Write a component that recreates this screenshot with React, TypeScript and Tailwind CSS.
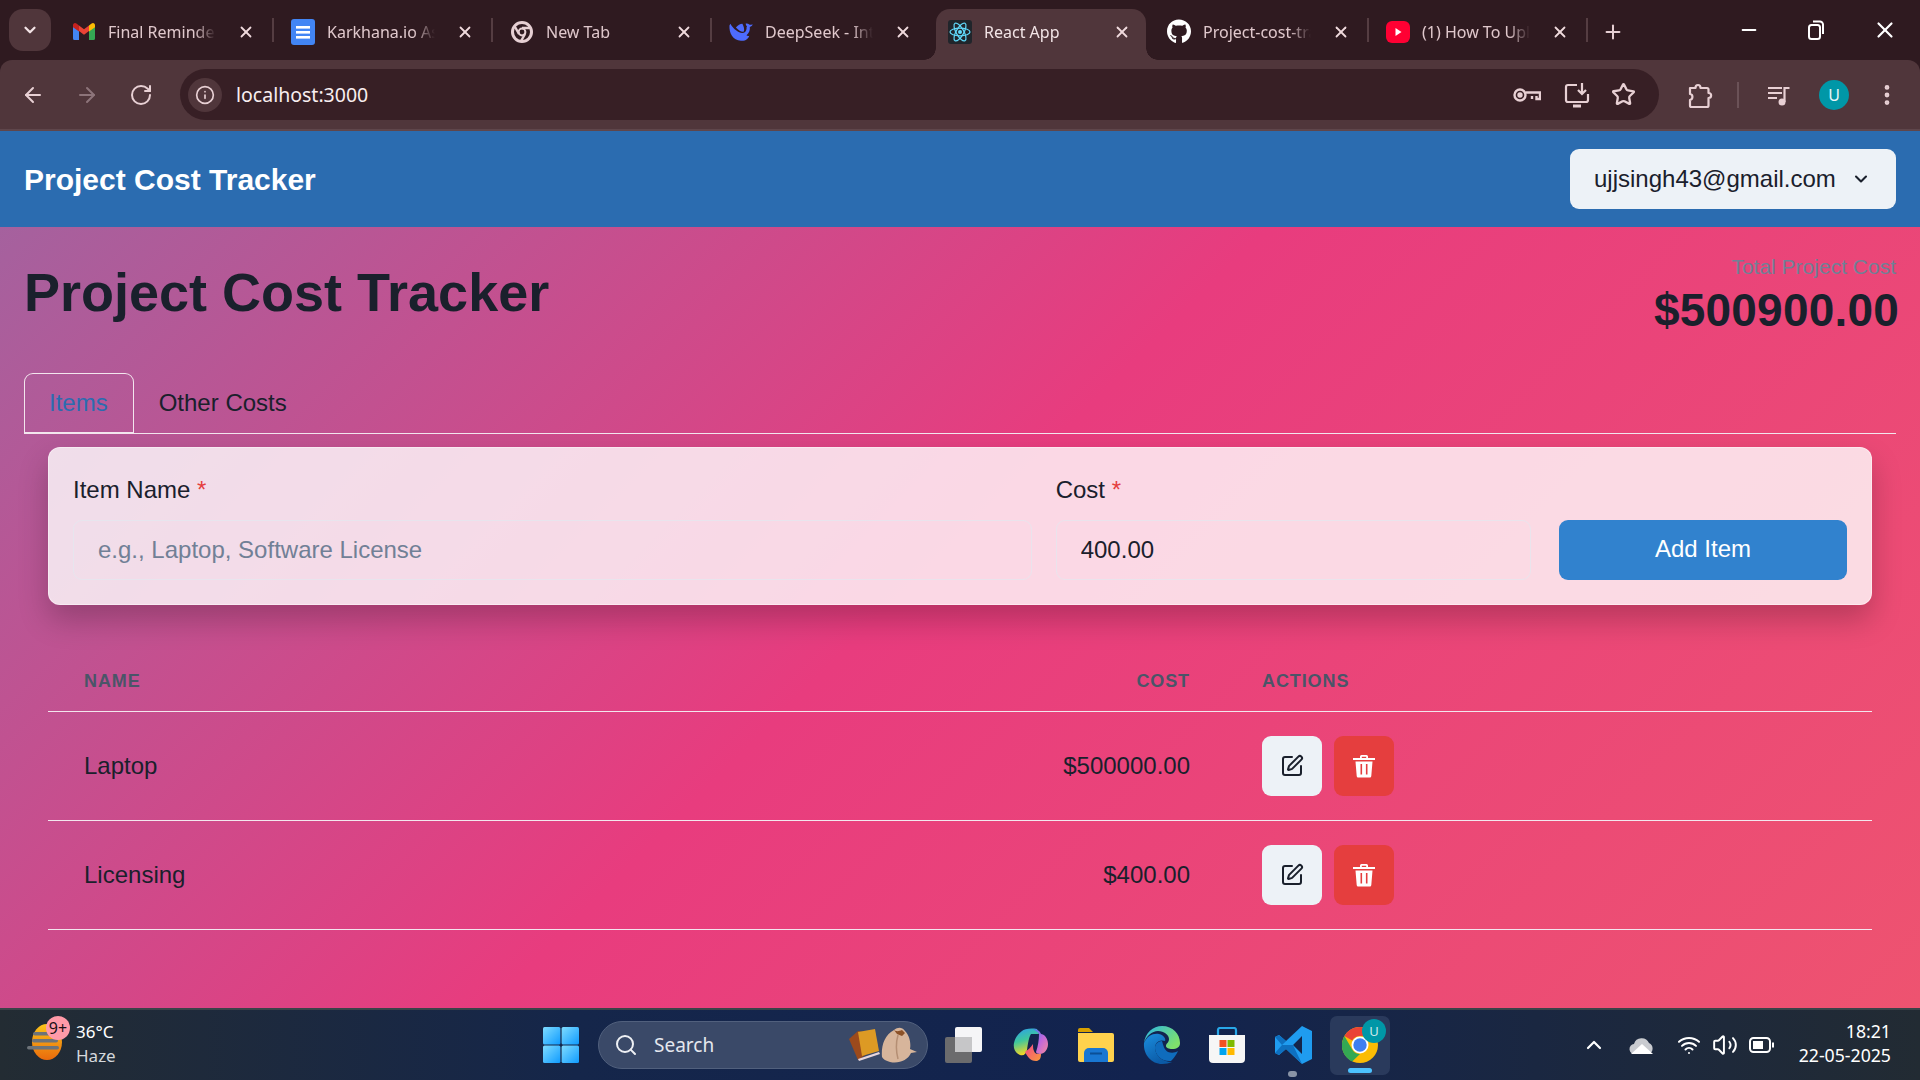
import { useState } from 'react';
import {
  ArrowLeft,
  ArrowRight,
  RotateCw,
  Info,
  Star,
  ChevronDown,
  ChevronUp,
  Plus,
  X,
  Minus,
  MoreVertical,
  Search,
  SquarePen,
  Wifi,
  Volume2,
} from 'lucide-react';
import { FaGithub } from 'react-icons/fa';

const GmailIcon = () => (
  <svg width="24" height="24" viewBox="0 0 24 24">
    <path fill="#4285F4" d="M1 20V6l6 4.5V20H2.5A1.5 1.5 0 0 1 1 18.5z" />
    <path fill="#34A853" d="M23 20V6l-6 4.5V20h4.5a1.5 1.5 0 0 0 1.5-1.5z" />
    <path fill="#EA4335" d="M7 11V5.5L12 9.3l5-3.8V11l-5 3.8z" />
    <path fill="#FBBC04" d="M17 5.5l2.6-1.9A2.1 2.1 0 0 1 23 5.3V7.2L17 11.6z" />
    <path fill="#C5221F" d="M1 7.2V5.3a2.1 2.1 0 0 1 3.4-1.7L7 5.5v6.1z" />
  </svg>
);

const DocsIcon = () => (
  <svg width="24" height="26" viewBox="0 0 24 26">
    <rect width="24" height="26" rx="3" fill="#4285F4" />
    <rect x="5" y="7" width="14" height="2.6" fill="#fff" />
    <rect x="5" y="12" width="14" height="2.6" fill="#fff" />
    <rect x="5" y="17" width="14" height="2.6" fill="#fff" />
  </svg>
);

const NewTabIcon = () => (
  <svg width="24" height="24" viewBox="0 0 24 24" fill="none" stroke="#e6cfd3">
    <circle cx="12" cy="12" r="9.5" strokeWidth="3" />
    <circle cx="12" cy="12" r="3.4" strokeWidth="2" />
    <path d="M12 8h9M9 14 4.5 6M15 14l-4.5 8" strokeWidth="2.4" />
  </svg>
);

const DeepSeekIcon = () => (
  <svg width="26" height="22" viewBox="0 0 26 22">
    <path
      fill="#4d6bfe"
      d="M0.5 4C0 12 4 20 13 20.5c5 .5 8-2.500 9-5.500-2 .5-2.500 0-3-.5 3-2.500 4-6.500 3.500-9 1.500-.5 3-1.500 3-3-1.500.5-2.500 1-3.500.5-1-1-2.500-1.500-4-1 1.500 3 1.500 7-.5 9-2.500 2-6.500 1-9.500-1.500C5.500 7.500 3 5 1.500 2z"
    />
    <path fill="#4d6bfe" d="M7.500 6C9.500 3.500 12 2 14.500 2c1.500 3 2.500 6 1.500 8.500C13.500 11.500 10 8.500 7.500 6z" />
    <circle cx="18.500" cy="5" r="0.8" fill="#2f1a20" />
  </svg>
);

const ReactIcon = () => (
  <svg width="24" height="24" viewBox="0 0 24 24">
    <rect width="24" height="24" rx="3" fill="#20252b" />
    <g fill="none" stroke="#61dafb" strokeWidth="1.2">
      <ellipse cx="12" cy="12" rx="10" ry="3.8" />
      <ellipse cx="12" cy="12" rx="10" ry="3.8" transform="rotate(60 12 12)" />
      <ellipse cx="12" cy="12" rx="10" ry="3.8" transform="rotate(120 12 12)" />
    </g>
    <circle cx="12" cy="12" r="2" fill="#61dafb" />
  </svg>
);

const YoutubeIcon = () => (
  <svg width="24" height="24" viewBox="0 0 24 24">
    <rect y="1" width="24" height="22" rx="6" fill="#ff0033" />
    <path d="M9.5 8v8l6-4z" fill="#fff" />
  </svg>
);

type TabInfo = { title: string; icon: React.ReactNode; active?: boolean; sep?: boolean };

const tabs: TabInfo[] = [
  { title: 'Final Reminder: Complete', icon: <GmailIcon />, sep: true },
  { title: 'Karkhana.io Assignment', icon: <DocsIcon />, sep: true },
  { title: 'New Tab', icon: <NewTabIcon />, sep: true },
  { title: 'DeepSeek - Into the', icon: <DeepSeekIcon /> },
  { title: 'React App', icon: <ReactIcon />, active: true },
  { title: 'Project-cost-tracker', icon: <FaGithub className="text-white text-[25px]" />, sep: true },
  { title: '(1) How To Upload', icon: <YoutubeIcon />, sep: true },
];

function Tab({ tab }: { tab: TabInfo }) {
  return (
    <div className="relative w-[219px] h-[51px] shrink-0 flex items-center pl-[18px] pr-[16px] pb-[6px]">
      {tab.active && (
        <>
          <div className="absolute left-[6px] right-[3px] top-0 bottom-0 bg-[#50363b] rounded-t-[14px]" />
          <div className="absolute left-[-6px] bottom-0 w-[12px] h-[12px] bg-[radial-gradient(circle_at_0_0,transparent_11.5px,#50363b_12px)]" />
          <div className="absolute right-[-9px] bottom-0 w-[12px] h-[12px] bg-[radial-gradient(circle_at_100%_0,transparent_11.5px,#50363b_12px)]" />
        </>
      )}
      <div className="relative w-[24px] h-[26px] flex items-center justify-center shrink-0">{tab.icon}</div>
      <span
        className={`relative ml-[12px] w-[108px] whitespace-nowrap overflow-hidden text-[16px] font-['Noto_Sans','Open_Sans',sans-serif] [mask-image:linear-gradient(to_right,black_80%,transparent)] ${
          tab.active ? 'text-[#f2e4e6]' : 'text-[#e0c8cc]'
        }`}
      >
        {tab.title}
      </span>
      <X className="relative ml-auto mr-[2px] text-[#f0dadd]" size={18} strokeWidth={2.4} />
      {tab.sep && <div className="absolute right-[-1px] top-[9px] w-[2px] h-[24px] bg-[#553d42]" />}
    </div>
  );
}

const PuzzleIcon = () => (
  <svg width="26" height="28" viewBox="0 0 26 28" fill="none" stroke="currentColor" strokeWidth="2.2" strokeLinejoin="round">
    <path d="M3 7h5.5c0-4 5-4 5 0H20a1.500 1.500 0 0 1 1.500 1.500v3.500c3.500 0 3.500 5 0 5v7.500A1.500 1.500 0 0 1 20 26H4.500A1.500 1.500 0 0 1 3 24.500V19c3-.5 3.500-5.500 0-6z" />
  </svg>
);

function ChromeBar() {
  return (
    <div className="bg-[#2f1a20]">
      <div className="h-[60px] flex items-end relative">
        <div className="absolute left-[9px] top-[9px] w-[42px] h-[42px] rounded-[14px] bg-[#50363b] flex items-center justify-center">
          <ChevronDown size={18} strokeWidth={3} className="text-[#f3e4e6]" />
        </div>
        <div className="flex ml-[54px]">
          {tabs.map((t) => (
            <Tab key={t.title} tab={t} />
          ))}
        </div>
        <div className="h-[51px] flex items-center ml-[15px] pb-[6px]">
          <Plus size={22} strokeWidth={2.2} className="text-[#e6cfd3]" />
        </div>
        <div className="absolute right-[22px] top-[17px] flex items-center gap-[46px] text-white">
          <Minus size={22} strokeWidth={2} />
          <svg width="20" height="22" viewBox="0 0 20 22" fill="none" stroke="#fff" strokeWidth="2">
            <rect x="3" y="6" width="11" height="14" rx="2.5" />
            <path d="M7 2.500h6.500A3 3 0 0 1 17 5.500V15" />
          </svg>
          <X size={26} strokeWidth={2} />
        </div>
      </div>
      <div className="h-[71px] bg-[#50363b] rounded-t-[12px] border-b-2 border-[#5f464b] flex items-center text-[#e8d0d4]">
        <div className="w-[180px] flex items-center pl-[21px] gap-[30px]">
          <ArrowLeft size={24} strokeWidth={2} />
          <ArrowRight size={24} strokeWidth={2} className="text-[#8d747a]" />
          <RotateCw size={24} strokeWidth={2} />
        </div>
        <div className="w-[1479px] h-[51px] rounded-full bg-[#371f25] flex items-center pl-[8px] pr-[23px]">
          <div className="w-[34px] h-[34px] rounded-full bg-[#50363b] flex items-center justify-center">
            <Info size={20} strokeWidth={2} />
          </div>
          <span className="ml-[14px] text-[19.5px] text-[#f8eef0] font-['Noto_Sans','Open_Sans',sans-serif]">localhost:3000</span>
          <div className="ml-auto flex items-center gap-[20px]">
            <svg width="28" height="20" viewBox="0 0 28 20" fill="none" stroke="currentColor" strokeWidth="2.4" className="mr-[3px]">
              <circle cx="7" cy="10" r="5.5" />
              <circle cx="7" cy="10" r="1.500" fill="currentColor" />
              <path d="M12.500 7.500H27V14h-3.500v-3M19 11v3" />
            </svg>
            <svg width="26" height="26" viewBox="0 0 26 26" fill="none" stroke="currentColor" strokeWidth="2.2" className="mr-[1px]">
              <path d="M13 3H4a2 2 0 0 0-2 2v13a2 2 0 0 0 2 2h18a2 2 0 0 0 2-2v-6" />
              <path d="M9 24h8" strokeWidth="3" />
              <path d="M18 1v10M14 8l4 4 4-4" />
            </svg>
            <Star size={25} strokeWidth={2.2} />
          </div>
        </div>
        <div className="ml-[28px]">
          <PuzzleIcon />
        </div>
        <div className="ml-[24px] w-[2px] h-[26px] bg-[#6b5257]" />
        <svg width="24" height="24" viewBox="0 0 24 24" fill="none" stroke="currentColor" strokeWidth="2.2" className="ml-[28px]">
          <path d="M1 5h14M1 10h14M1 15h9" />
          <circle cx="15" cy="19" r="3.5" fill="currentColor" stroke="none" />
          <path d="M17.500 19V5h5" />
        </svg>
        <div className="ml-[28px] w-[30px] h-[30px] rounded-full bg-[#0097a7] flex items-center justify-center text-[16px] text-[#e6f6f8] font-['Noto_Sans','Open_Sans',sans-serif]">
          U
        </div>
        <MoreVertical size={26} strokeWidth={2.4} className="ml-[25px]" />
      </div>
    </div>
  );
}

function TrashIcon() {
  return (
    <svg width="22" height="24" viewBox="0 0 22 24" fill="#fff">
      <path d="M0 4h22v2H0zM7 4V2.500A1.500 1.500 0 0 1 8.500 1h5A1.500 1.500 0 0 1 15 2.500V4h-1.800V2.800H8.800V4z" />
      <path
        fillRule="evenodd"
        d="M2.500 7.500h17L18.300 22a1.500 1.500 0 0 1-1.500 1.500H5.200A1.500 1.500 0 0 1 3.700 22zM7.500 10v10.500h1.600V10zm5.400 0v10.500h1.600V10z"
      />
    </svg>
  );
}

const rows = [
  { name: 'Laptop', cost: '$500000.00' },
  { name: 'Licensing', cost: '$400.00' },
];

function TrackerPage() {
  const [tab, setTab] = useState('items');
  return (
    <div className="h-[781px] bg-[linear-gradient(135deg,#a5619e_0%,#e83c7e_47%,#ee5370_100%)] px-[24px] pt-[24px] text-[#1a202c]">
      <div className="flex items-center justify-between mb-[36px]">
        <h1 className="text-[54px] font-bold leading-[1.2] mb-[2px]">Project Cost Tracker</h1>
        <div className="text-right">
          <p className="text-[21px] leading-[31.5px] text-[#718096]">Total Project Cost</p>
          <p className="text-[46px] font-bold leading-[54px] tracking-[0.2px] mr-[-3px]">$500900.00</p>
        </div>
      </div>

      <div className="flex border-b border-[#f3e6ee] h-[61px]">
        <button
          onClick={() => setTab('items')}
          className={`h-[61px] pl-[24px] pr-[25px] text-[24px] rounded-t-[9px] ${tab === 'items' ? 'border border-b-2 border-[#f3e6ee] text-[#2b6cb0]' : ''}`}
        >
          Items
        </button>
        <button
          onClick={() => setTab('other')}
          className={`h-[61px] px-[25px] text-[24px] rounded-t-[9px] ${tab === 'other' ? 'border border-b-2 border-[#f3e6ee] text-[#2b6cb0]' : ''}`}
        >
          Other Costs
        </button>
      </div>

      <div className="mx-[24px] mt-[13px] bg-[rgba(255,255,255,0.8)] rounded-[12px] border border-[rgba(255,255,255,0.4)] p-[24px] shadow-[0_15px_30px_rgba(0,0,0,0.22)] flex items-end gap-[24px]">
        <div className="flex-[2]">
          <label className="block text-[24px] leading-[36px] mb-[12px]">
            Item Name <span className="text-[#e53e3e]">*</span>
          </label>
          <input
            placeholder="e.g., Laptop, Software License"
            className="w-full h-[60px] px-[24px] text-[24px] rounded-[9px] border border-[rgba(226,232,240,0.7)] outline-none placeholder:text-[#718096]"
          />
        </div>
        <div className="flex-1">
          <label className="block text-[24px] leading-[36px] mb-[12px]">
            Cost <span className="text-[#e53e3e]">*</span>
          </label>
          <input
            defaultValue="400.00"
            className="w-[calc(100%-4px)] h-[60px] px-[24px] text-[24px] rounded-[9px] border border-[rgba(226,232,240,0.7)] outline-none"
          />
        </div>
        <button className="w-[288px] h-[60px] rounded-[9px] bg-[#3182ce] text-white text-[24px] font-medium pb-[2px]">Add Item</button>
      </div>

      <div className="mx-[24px] mt-[43px]">
        <table className="w-full table-fixed border-collapse">
          <thead>
            <tr className="border-b border-[#f3e6ee] text-[18px] text-[#4a5568] uppercase tracking-[0.9px]">
              <th className="px-[36px] pt-[20px] pb-[17px] font-bold text-left leading-[26px]">Name</th>
              <th className="w-[400px] px-[36px] pt-[20px] pb-[17px] font-bold text-right leading-[26px]">Cost</th>
              <th className="w-[646px] px-[36px] pt-[20px] pb-[17px] font-bold text-left leading-[26px]">Actions</th>
            </tr>
          </thead>
          <tbody>
            {rows.map((r) => (
              <tr key={r.name} className="border-b border-[#f3e6ee] text-[24px]">
                <td className="px-[36px] py-[24px]">{r.name}</td>
                <td className="px-[36px] py-[24px] text-right">{r.cost}</td>
                <td className="px-[36px] py-[24px]">
                  <div className="flex gap-[12px]">
                    <button className="w-[60px] h-[60px] rounded-[9px] bg-[#edf2f7] flex items-center justify-center">
                      <SquarePen size={24} strokeWidth={2} className="text-[#1a202c]" />
                    </button>
                    <button className="w-[60px] h-[60px] rounded-[9px] bg-[#e53e3e] flex items-center justify-center">
                      <TrashIcon />
                    </button>
                  </div>
                </td>
              </tr>
            ))}
          </tbody>
        </table>
      </div>
    </div>
  );
}

const WeatherIcon = () => (
  <svg width="38" height="36" viewBox="0 0 38 36">
    <defs>
      <linearGradient id="sun" x1="0" y1="0" x2="0" y2="1">
        <stop offset="0" stopColor="#fcc419" />
        <stop offset="1" stopColor="#ea6a0c" />
      </linearGradient>
    </defs>
    <ellipse cx="20" cy="18" rx="15" ry="18" fill="url(#sun)" />
    <g fill="#6d7379">
      <rect x="6" y="8" width="20" height="3.5" rx="1.7" />
      <rect x="5" y="15" width="26" height="3.5" rx="1.7" />
      <rect x="0" y="22" width="32" height="3.5" rx="1.7" />
    </g>
  </svg>
);

const WinLogo = () => (
  <svg width="36" height="36" viewBox="0 0 36 36">
    <defs>
      <linearGradient id="win" x1="0" y1="0" x2="1" y2="1">
        <stop offset="0" stopColor="#7fdcff" />
        <stop offset="1" stopColor="#0f9bff" />
      </linearGradient>
    </defs>
    <rect x="0" y="0" width="17.4" height="17.4" rx="1.5" fill="url(#win)" />
    <rect x="18.6" y="0" width="17.4" height="17.4" rx="1.5" fill="url(#win)" />
    <rect x="0" y="18.6" width="17.4" height="17.4" rx="1.5" fill="url(#win)" />
    <rect x="18.6" y="18.6" width="17.4" height="17.4" rx="1.5" fill="url(#win)" />
  </svg>
);

const SearchArt = () => (
  <svg width="72" height="36" viewBox="0 0 72 36">
    <path d="M1 12 10 4l5 1 4 22-9 6z" fill="#9c4a1c" />
    <path d="M10 5 27 2l4 22-17 5z" fill="#dd9a24" />
    <path d="M10 32l21-7 1 2-21 7z" fill="#e8d6dc" />
    <path d="M34 30c-1-10 2-22 12-27 4-3 8-3 11 1 5 5 6 13 5 18l7 3-6 1c-3 7-12 11-21 9-4-1-7-3-8-5z" fill="#d7b59b" />
    <path d="M46 3c3 2 5 1 8 0l3 3-3 3-5-2z" fill="#8c5228" />
    <path d="M50 8c-2 7-2 16 0 24" fill="none" stroke="#b58f74" strokeWidth="1.5" />
  </svg>
);

const TaskView = () => (
  <svg width="38" height="36" viewBox="0 0 38 36">
    <rect x="0" y="10" width="27" height="26" rx="2" fill="#6b6b6d" />
    <rect x="10" y="0" width="27" height="25" rx="2" fill="#f5f5f7" />
    <rect x="10" y="10" width="17" height="15" fill="#c6c6c8" />
  </svg>
);

const Copilot = () => (
  <svg width="36" height="34" viewBox="0 0 36 34">
    <defs>
      <linearGradient id="co1" x1="0" y1="0" x2="0.3" y2="1">
        <stop offset="0" stopColor="#2c9df0" />
        <stop offset="0.5" stopColor="#3fc79c" />
        <stop offset="1" stopColor="#f6d623" />
      </linearGradient>
      <linearGradient id="co2" x1="0" y1="0" x2="1" y2="1">
        <stop offset="0" stopColor="#3b7df0" />
        <stop offset="0.5" stopColor="#c067dc" />
        <stop offset="1" stopColor="#f58a9a" />
      </linearGradient>
      <linearGradient id="co3" x1="0" y1="0" x2="1" y2="1">
        <stop offset="0" stopColor="#f4458c" />
        <stop offset="1" stopColor="#f79a3a" />
      </linearGradient>
    </defs>
    <path d="M9 3C11 1 17 0 24 1l2 5-8 0c-2 3-3 9-4 16-1 4-3 6-7 5C2 25 0 20 1 15 2 10 5 6 9 3z" fill="url(#co1)" />
    <path d="M20 1c4 0 7 2 8 5 3 0 7 4 7 10 0 6-4 10-8 10-2 0-4-1-4-2 2-6 3-12 3-18-1-2-4-4-6-5z" fill="url(#co2)" />
    <path d="M12 24c2 4 5 9 11 9 3 0 5-2 5-7-4 0-6 0-7-3-1-2-1-4-1-7-2 3-5 6-8 8z" fill="url(#co3)" />
  </svg>
);

const Explorer = () => (
  <svg width="36" height="34" viewBox="0 0 36 34">
    <path d="M0 2a2 2 0 0 1 2-2h9l4 4h-15z" fill="#d8a000" />
    <path d="M0 5h34a2 2 0 0 1 2 2v25a2 2 0 0 1-2 2H2a2 2 0 0 1-2-2z" fill="#ffd24d" />
    <path d="M6 34V25a5 5 0 0 1 5-5h14a5 5 0 0 1 5 5v9z" fill="#1977d2" />
    <rect x="12" y="24.5" width="12" height="2" fill="#0b4f96" />
  </svg>
);

const Edge = () => (
  <svg width="38" height="38" viewBox="0 0 38 38">
    <defs>
      <linearGradient id="ed1" x1="0" y1="0" x2="1" y2="0.6">
        <stop offset="0" stopColor="#2ab5e6" />
        <stop offset="1" stopColor="#7fe06b" />
      </linearGradient>
      <linearGradient id="ed2" x1="0" y1="0" x2="0.5" y2="1">
        <stop offset="0" stopColor="#1b8ede" />
        <stop offset="1" stopColor="#0b5aa6" />
      </linearGradient>
    </defs>
    <path d="M1 17C2 7 10 0 19 0c11 0 18 8 18 17 0 4-3 6-8 6-3 0-6-1-6-3 0-3 3-3 3-7 0-4-5-8-11-8C9 5 3 10 1 17z" fill="url(#ed1)" />
    <path d="M1 17c3-7 9-10 15-9 5 1 7 5 6 7-5-2-10 1-10 7 0 7 7 14 17 14-3 1-6 2-10 2C9 38 0 29 1 17z" fill="url(#ed2)" />
    <path d="M12 22c0-4 3-7 7-7 1 3 2 9 6 11 3 1 7 1 10-1-2 5-6 9-7 10-9 1-16-6-16-13z" fill="#0f6cbd" />
  </svg>
);

const Store = () => (
  <svg width="36" height="36" viewBox="0 0 36 36">
    <path d="M9 8V3a2 2 0 0 1 2-2h14a2 2 0 0 1 2 2v5" fill="none" stroke="#28a7e8" strokeWidth="2.2" />
    <path d="M0 8h36v24a4 4 0 0 1-4 4H4a4 4 0 0 1-4-4z" fill="#f6f6f6" />
    <rect x="10.5" y="13" width="7" height="7" fill="#f25022" />
    <rect x="18.5" y="13" width="7" height="7" fill="#7fba00" />
    <rect x="10.5" y="21" width="7" height="7" fill="#00a4ef" />
    <rect x="18.5" y="21" width="7" height="7" fill="#ffb900" />
  </svg>
);

const VsCode = () => (
  <svg width="38" height="38" viewBox="0 0 38 38">
    <path d="M27 0l10 5v28l-10 5-16-15-7 6-4-2V11l4-2 7 6zm0 10-9 9 9 9z" fill="#1f9cf0" />
    <path d="M27 0 11 15l-7-6-4 2 7 8zM0 27l4 2 7-6 16 15-9-19-11 0z" fill="#0e70c0" />
  </svg>
);

const ChromeLogo = () => (
  <svg width="36" height="36" viewBox="0 0 36 36">
    <circle cx="18" cy="18" r="18" fill="#fbbc04" />
    <path d="M18 0a18 18 0 0 1 15.6 9H18a9 9 0 0 0-7.8 4.5L2.4 9A18 18 0 0 1 18 0z" fill="#ea4335" />
    <path d="M2.400 9l7.800 13.500A9 9 0 0 0 18 27l-7.800 7.500A18 18 0 0 1 2.400 9z" fill="#34a853" />
    <circle cx="18" cy="18" r="8.5" fill="#fff" />
    <circle cx="18" cy="18" r="6.7" fill="#3f7ff0" />
  </svg>
);

function Taskbar() {
  return (
    <div className="h-[72px] border-t-2 border-[#3a4348] bg-[linear-gradient(90deg,#232c33_0%,#15264a_30%,#12234f_60%,#222b33_100%)] flex items-center text-white font-['Noto_Sans','Open_Sans',sans-serif]">
      <div className="w-[543px] shrink-0 flex items-center pl-[27px] relative">
        <div className="mb-[6px]">
          <WeatherIcon />
        </div>
        <div className="absolute left-[46px] top-[-4px] w-[24px] h-[24px] rounded-full bg-[#ff9aa8] text-[#1a1015] text-[16px] leading-[24px] text-center">9+</div>
        <div className="ml-[11px] leading-[24px] mb-[2px]">
          <div className="text-[17px]">36°C</div>
          <div className="text-[17px] text-[#d4d8dc]">Haze</div>
        </div>
      </div>
      <WinLogo />
      <div className="ml-[19px] w-[330px] h-[48px] rounded-full bg-[#3a4968] border border-[#51607d] flex items-center pl-[15px]">
        <Search size={24} strokeWidth={2} className="text-[#eef0f4]" />
        <span className="ml-[16px] text-[19px] text-[#e4e7ee]">Search</span>
        <div className="ml-auto mr-[7px]">
          <SearchArt />
        </div>
      </div>
      <div className="ml-[17px]">
        <TaskView />
      </div>
      <div className="ml-[30px]">
        <Copilot />
      </div>
      <div className="ml-[29px]">
        <Explorer />
      </div>
      <div className="ml-[29px]">
        <Edge />
      </div>
      <div className="ml-[28px]">
        <Store />
      </div>
      <div className="ml-[30px] relative">
        <VsCode />
        <div className="absolute left-[13px] bottom-[-13px] w-[9px] h-[6px] rounded-full bg-[#8a94a6]" />
      </div>
      <div className="ml-[17px] w-[60px] h-[59px] rounded-[7px] bg-[#2a3a5c] relative flex items-center justify-center">
        <ChromeLogo />
        <div className="absolute right-[4px] top-[3px] w-[24px] h-[24px] rounded-full bg-[#0097a7] text-[13px] text-center leading-[24px] text-[#cfe9ec]">U</div>
        <div className="absolute left-[18px] bottom-[2px] w-[24px] h-[5px] rounded-full bg-[#4cc2ff]" />
      </div>
      <div className="ml-auto flex items-center pr-[29px]">
        <ChevronUp size={24} strokeWidth={2.2} />
        <svg width="26" height="20" viewBox="0 0 26 20" className="ml-[23px]">
          <path d="M6 19a5 5 0 0 1-1-10 8 8 0 0 1 15-1 6 6 0 0 1 0 11z" fill="#c9cbd0" />
          <path d="M2 19 13 9l11 10z" fill="#ffffff" />
        </svg>
        <Wifi size={24} strokeWidth={2} className="ml-[22px]" />
        <Volume2 size={26} strokeWidth={1.8} className="ml-[11px]" />
        <svg width="26" height="20" viewBox="0 0 26 20" fill="none" stroke="#fff" strokeWidth="2" className="ml-[11px]">
          <rect x="1" y="3" width="20" height="14" rx="3.5" />
          <rect x="4" y="6" width="10" height="8" fill="#fff" stroke="none" />
          <path d="M24 7.500v5" />
        </svg>
        <div className="ml-[22px] text-right text-[17.7px] leading-[24px] w-[94px] mb-[4px]">
          <div>18:21</div>
          <div>22-05-2025</div>
        </div>
      </div>
    </div>
  );
}

export default function App() {
  return (
    <div className="w-[1920px] h-[1080px] overflow-hidden flex flex-col font-['Liberation_Sans',Arial,sans-serif]">
      <ChromeBar />
      <div className="h-[96px] bg-[#2b6cb0] flex items-center justify-between pl-[24px] pr-[24px]">
        <span className="text-[30px] font-bold text-white">Project Cost Tracker</span>
        <button className="w-[326px] h-[60px] rounded-[9px] bg-[#edf2f7] text-[#1a202c] text-[24px] flex items-center pl-[24px]">
          ujjsingh43@gmail.com
          <ChevronDown size={20} strokeWidth={2.5} className="ml-[15px]" />
        </button>
      </div>
      <TrackerPage />
      <Taskbar />
    </div>
  );
}
